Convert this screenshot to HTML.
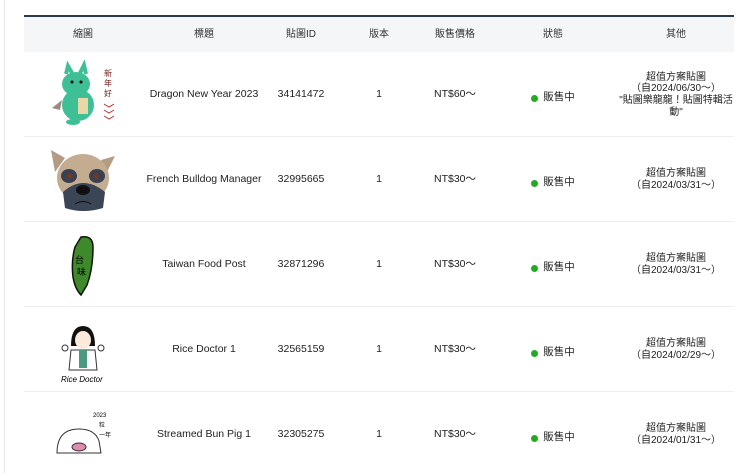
<!DOCTYPE html>
<html><head><meta charset="utf-8"><style>
body{margin:0;width:740px;height:473px;background:#fff;overflow:hidden;position:relative;font-family:"Liberation Sans","Noto Sans CJK TC",sans-serif;color:#222;font-size:10.5px}
.side{position:absolute;left:4px;top:0;width:1px;height:473px;background:#e6e6e6}
.tbl{position:absolute;left:24px;top:15px;width:710px}
.topb{height:2px;background:#2b3a4a}
.hdr{height:35px;background:#f4f6f8;position:relative}
.row{height:84px;border-bottom:1px solid #eceef0;position:relative}
.c{position:absolute;top:0;height:100%;display:flex;align-items:center;justify-content:center;text-align:center;line-height:11.7px;white-space:nowrap}
.hdr .c{font-size:10px;color:#333}
.r .c{padding-top:2px;box-sizing:border-box}
.dot{display:inline-block;width:7px;height:7px;border-radius:50%;background:#22aa22;margin-right:5px}
.r .st{padding-top:8px}
</style></head><body>
<div class="side"></div>
<div class="tbl">
<div class="topb"></div>
<div class="hdr">
<div class="c" style="left:0;width:118px">縮圖</div>
<div class="c" style="left:118px;width:124px">標題</div>
<div class="c" style="left:242px;width:70px">貼圖ID</div>
<div class="c" style="left:312px;width:86px">版本</div>
<div class="c" style="left:398px;width:66px">販售價格</div>
<div class="c" style="left:464px;width:130px">狀態</div>
<div class="c" style="left:594px;width:116px">其他</div>
</div>

<div class="row r">
<div class="c" style="left:0;width:118px"><svg width="70" height="70" viewBox="0 0 70 70"><path d="M14 40 L4 48 L12 50 Z" fill="#9a8a80"/><ellipse cx="30" cy="45" rx="16" ry="16" fill="#3fbf95"/><ellipse cx="28" cy="24" rx="14" ry="12" fill="#3fbf95"/><path d="M18 14 L20 6 L24 13 M32 13 L36 5 L38 14" stroke="#3fbf95" stroke-width="4" fill="none"/><circle cx="24" cy="22" r="1.5"/><circle cx="33" cy="22" r="1.5"/><rect x="30" y="38" width="10" height="16" fill="#e8d8a8"/><ellipse cx="25" cy="62" rx="7" ry="3" fill="#3fbf95"/><text x="56" y="16" font-size="8" fill="#7a2020">新</text><text x="56" y="26" font-size="8" fill="#7a2020">年</text><text x="56" y="36" font-size="8" fill="#7a2020">好</text><path d="M56 44 l5 3 l5-3 M56 50 l5 3 l5-3 M56 56 l5 3 l5-3" stroke="#c03030" fill="none"/></svg></div>
<div class="c" style="left:118px;width:124px">Dragon New Year 2023</div>
<div class="c" style="left:242px;width:70px">34141472</div>
<div class="c" style="left:312px;width:86px">1</div>
<div class="c" style="left:398px;width:66px">NT$60～</div>
<div class="c st" style="left:464px;width:130px"><span class="dot"></span>販售中</div>
<div class="c" style="left:594px;width:116px;font-size:10px">超值方案貼圖<br>（自2024/06/30～）<br>"貼圖樂龍龍！貼圖特輯活<br>動"</div>
</div>

<div class="row r">
<div class="c" style="left:0;width:118px"><svg width="80" height="72" viewBox="0 0 80 72"><path d="M8 6 L22 14 L12 28 Z" fill="#b49c84"/><path d="M72 12 L58 16 L64 28 Z" fill="#b49c84"/><ellipse cx="40" cy="34" rx="26" ry="24" fill="#c4ac90"/><ellipse cx="26" cy="32" rx="8" ry="7" fill="#3a4050"/><ellipse cx="54" cy="32" rx="8" ry="7" fill="#3a4050"/><circle cx="27" cy="32" r="3" fill="#6a3a2a"/><circle cx="53" cy="32" r="3" fill="#6a3a2a"/><path d="M20 48 Q40 30 62 48 L60 64 Q40 70 22 64 Z" fill="#3a4556"/><ellipse cx="40" cy="46" rx="7" ry="5" fill="#111"/><path d="M32 60 Q40 55 48 60" stroke="#111" fill="none"/></svg></div>
<div class="c" style="left:118px;width:124px">French Bulldog Manager</div>
<div class="c" style="left:242px;width:70px">32995665</div>
<div class="c" style="left:312px;width:86px">1</div>
<div class="c" style="left:398px;width:66px">NT$30～</div>
<div class="c st" style="left:464px;width:130px"><span class="dot"></span>販售中</div>
<div class="c" style="left:594px;width:116px;font-size:10px">超值方案貼圖<br>（自2024/03/31～）</div>
</div>

<div class="row r">
<div class="c" style="left:0;width:118px"><svg width="40" height="64" viewBox="0 0 40 64"><path d="M18 4 Q30 2 30 14 Q30 36 24 52 L18 62 Q12 56 10 44 Q8 28 12 14 Z" fill="#3e8a2a" stroke="#111" stroke-width="1.5"/><text x="12" y="30" font-size="9">台</text><text x="14" y="42" font-size="9">味</text></svg></div>
<div class="c" style="left:118px;width:124px">Taiwan Food Post</div>
<div class="c" style="left:242px;width:70px">32871296</div>
<div class="c" style="left:312px;width:86px">1</div>
<div class="c" style="left:398px;width:66px">NT$30～</div>
<div class="c st" style="left:464px;width:130px"><span class="dot"></span>販售中</div>
<div class="c" style="left:594px;width:116px;font-size:10px">超值方案貼圖<br>（自2024/03/31～）</div>
</div>

<div class="row r">
<div class="c" style="left:0;width:118px"><svg width="60" height="68" viewBox="0 0 60 68"><path d="M18 30 Q18 10 30 10 Q42 10 42 30 Z" fill="#111"/><ellipse cx="30" cy="24" rx="8" ry="9" fill="#fbe9dc"/><path d="M18 34 L42 34 L44 54 L16 54 Z" fill="#fff" stroke="#333"/><rect x="26" y="34" width="8" height="18" fill="#4a9a80"/><circle cx="12" cy="32" r="3" fill="#fff" stroke="#333"/><circle cx="48" cy="32" r="3" fill="#fff" stroke="#333"/><text x="8" y="66" font-size="8" font-style="italic">Rice Doctor</text></svg></div>
<div class="c" style="left:118px;width:124px">Rice Doctor 1</div>
<div class="c" style="left:242px;width:70px">32565159</div>
<div class="c" style="left:312px;width:86px">1</div>
<div class="c" style="left:398px;width:66px">NT$30～</div>
<div class="c st" style="left:464px;width:130px"><span class="dot"></span>販售中</div>
<div class="c" style="left:594px;width:116px;font-size:10px">超值方案貼圖<br>（自2024/02/29～）</div>
</div>

<div class="row r" style="border:none">
<div class="c" style="left:0;width:118px"><svg width="64" height="60" viewBox="0 0 64 60"><path d="M6 48 Q6 24 28 24 Q44 24 48 36 L50 48 Z" fill="#fff" stroke="#333"/><ellipse cx="28" cy="42" rx="7" ry="4" fill="#e08ab0" stroke="#333"/><text x="42" y="12" font-size="6">2023</text><text x="48" y="22" font-size="6">粒</text><text x="48" y="32" font-size="6">一年</text></svg></div>
<div class="c" style="left:118px;width:124px">Streamed Bun Pig 1</div>
<div class="c" style="left:242px;width:70px">32305275</div>
<div class="c" style="left:312px;width:86px">1</div>
<div class="c" style="left:398px;width:66px">NT$30～</div>
<div class="c st" style="left:464px;width:130px"><span class="dot"></span>販售中</div>
<div class="c" style="left:594px;width:116px;font-size:10px">超值方案貼圖<br>（自2024/01/31～）</div>
</div>
</div>
</body></html>
